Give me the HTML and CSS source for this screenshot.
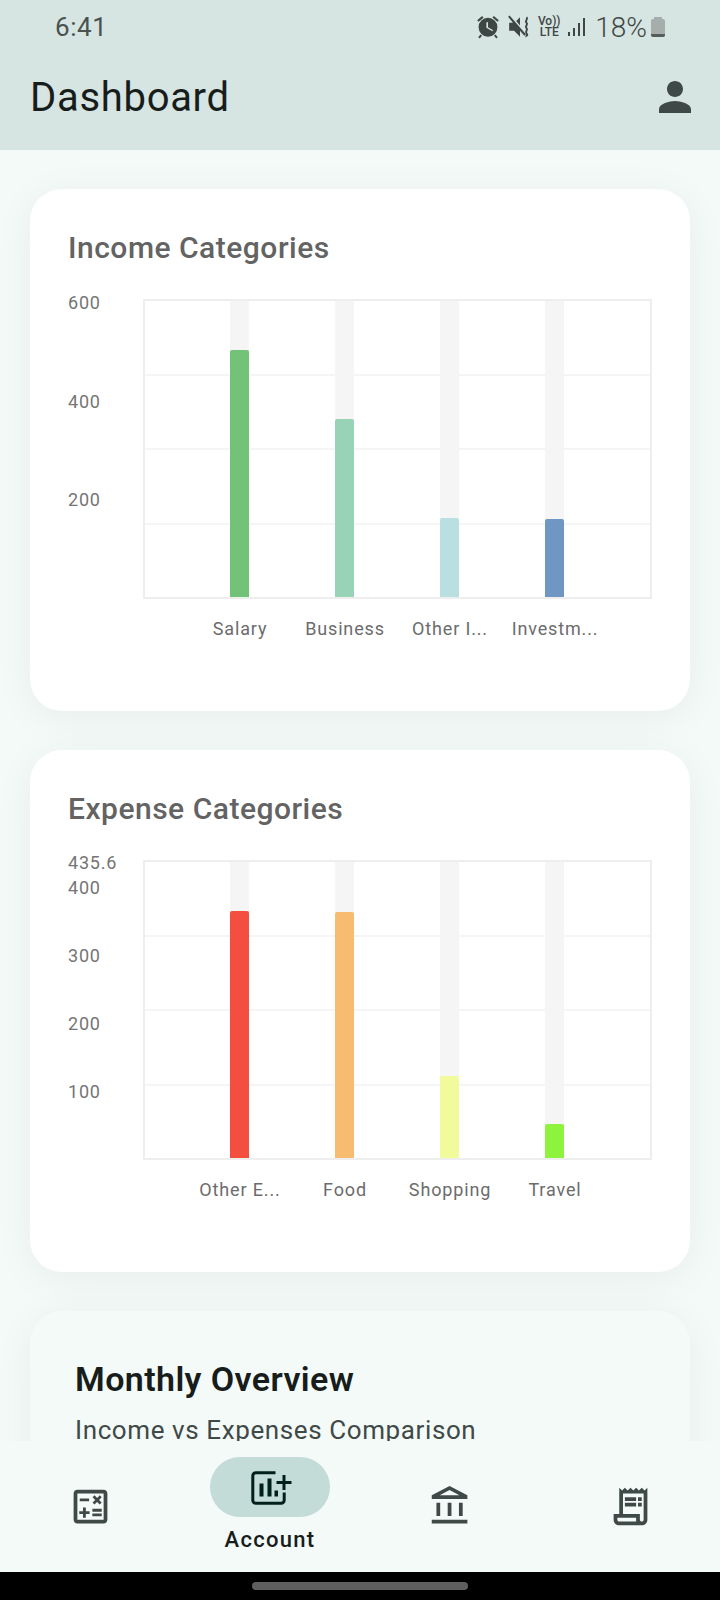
FILE: index.html
```html
<!DOCTYPE html>
<html lang="en">
<head>
  <meta charset="UTF-8" />
  <meta name="viewport" content="width=device-width, initial-scale=1.0"/>
  <title>Dashboard</title>
  <link rel="stylesheet" href="styles.css">
</head>
<body>
  <div class="screen">

    <!-- status bar and app bar -->
    <header class="header">
      <div class="status">
        <span class="time">6:41</span>
        <div class="status-icons">
          <svg class="st-alarm" viewBox="0 0 24 24"><path d="M22 5.7l-4.600-3.900-1.300 1.500 4.600 3.900L22 5.700zM7.900 3.400L6.600 1.900 2 5.700l1.300 1.500 4.600-3.800zM12 3.500a8.700 8.700 0 1 0 0 17.400 8.700 8.700 0 0 0 0-17.400zm4 12.500l-5.500-3.200V7.500H12v4.700l4.800 2.700-.8 1.100z" fill-rule="evenodd"/><path d="M5 19l-2 2.500 1.300 1 2.200-2.500zM19 19l2 2.500-1.300 1-2.200-2.500z"/></svg>
          <svg class="st-mute" viewBox="0 0 24 24"><path d="M1 2.500l1.400-1.200 15 17.500-1.400 1.200-4-4.600V21l-5.500-5.500H2V8h3.500L1 2.500zM12 3v7.500L8.500 6.500 12 3z"/><path d="M18 3c2 2-2 3 0 5s-2 3 0 5-2 3 0 5-1 2 0 3" fill="none" stroke="#3f4745" stroke-width="1.800"/></svg>
          <div class="st-lte"><span>Vo))</span><span>LTE</span></div>
          <div class="st-signal"><i class="s1"></i><i class="s2"></i><i class="s3"></i><i class="s4"></i></div>
          <span class="st-pct">18%</span>
          <div class="st-batt"><b></b><div class="st-cell"><i></i></div></div>
        </div>
      </div>
      <div class="appbar">
        <h1>Dashboard</h1>
        <svg class="icon-person" viewBox="0 0 24 24"><path d="M12 12c2.210 0 4-1.790 4-4s-1.790-4-4-4-4 1.790-4 4 1.790 4 4 4zm0 2c-2.670 0-8 1.340-8 4v2h16v-2c0-2.660-5.330-4-8-4z"/></svg>
      </div>
    </header>

    <main class="content">
      <!-- income chart -->
      <section class="card">
        <h2>Income Categories</h2>
        <div class="chart">
          <div class="y-axis y-income">
            <span>600</span><span>400</span><span>200</span>
          </div>
          <div class="plot">
            <div class="grid"><i></i><i></i><i></i><i></i></div>
            <div class="bars">
              <div class="slot"><div class="track"><div class="bar c-green" style="height:247px"></div></div></div>
              <div class="slot"><div class="track"><div class="bar c-mint" style="height:178px"></div></div></div>
              <div class="slot"><div class="track"><div class="bar c-aqua" style="height:79px"></div></div></div>
              <div class="slot"><div class="track"><div class="bar c-blue" style="height:78px"></div></div></div>
            </div>
          </div>
        </div>
        <div class="x-axis">
          <span>Salary</span><span>Business</span><span>Other I...</span><span>Investm...</span>
        </div>
      </section>

      <!-- expense chart -->
      <section class="card">
        <h2>Expense Categories</h2>
        <div class="chart">
          <div class="y-axis y-expense">
            <span class="y-max">435.6</span><span>400</span><span>300</span><span>200</span><span>100</span>
          </div>
          <div class="plot">
            <div class="grid"><i></i><i></i><i></i><i></i></div>
            <div class="bars">
              <div class="slot"><div class="track"><div class="bar c-red" style="height:247px"></div></div></div>
              <div class="slot"><div class="track"><div class="bar c-orange" style="height:246px"></div></div></div>
              <div class="slot"><div class="track"><div class="bar c-lemon" style="height:82px"></div></div></div>
              <div class="slot"><div class="track"><div class="bar c-lime" style="height:34px"></div></div></div>
            </div>
          </div>
        </div>
        <div class="x-axis">
          <span>Other E...</span><span>Food</span><span>Shopping</span><span>Travel</span>
        </div>
      </section>

      <!-- monthly card, cut off by the nav -->
      <section class="card card-tint">
        <h3>Monthly Overview</h3>
        <p>Income vs Expenses Comparison</p>
      </section>
    </main>

    <!-- bottom navigation -->
    <nav class="nav">
      <div class="nav-item">
        <svg class="nav-icon" viewBox="0 0 24 24"><path d="M19 3H5c-1.100 0-2 .9-2 2v14c0 1.100.9 2 2 2h14c1.100 0 2-.9 2-2V5c0-1.100-.9-2-2-2zm0 16H5V5h14v14z"/><path d="M6.250 7.720h5v1.500h-5zM13 15.750h5v1.500h-5zM13 13.250h5v1.500h-5zM8 18h1.500v-2h2v-1.500h-2v-2H8v2H6V16h2v2zM14.090 10.950l1.410-1.410 1.410 1.410 1.060-1.060-1.410-1.420 1.410-1.410L16.970 6l-1.410 1.410L14.150 6l-1.060 1.060 1.410 1.410-1.410 1.420z"/></svg>
      </div>
      <div class="nav-item active">
        <div class="pill">
          <svg class="nav-icon" viewBox="0 0 45 45"><path class="icon-line" d="M27.500 7.800H7.800a3 3 0 0 0-3 3v24.400a3 3 0 0 0 3 3h25.400a3 3 0 0 0 3-3v-7.700"/><path class="icon-line" d="M28.500 17.500h15M36 10v15"/><path d="M11.500 18.500h4v13h-4zM19.500 13.500h4v18h-4zM26.500 25.500H30v6h-3.500z"/></svg>
        </div>
        <span class="nav-label">Account</span>
      </div>
      <div class="nav-item">
        <svg class="nav-icon" viewBox="0 0 24 24"><path d="M6.500 10h-2v7h2v-7zm6 0h-2v7h2v-7zm8.500 9H2v2h19v-2zm-2.500-9h-2v7h2v-7zm-7-6.740L16.710 6H6.290l5.210-2.740m0-2.260L2 6v2h19V6l-9.500-5z"/></svg>
      </div>
      <div class="nav-item">
        <svg class="nav-icon" viewBox="0 0 24 24"><path fill-rule="evenodd" d="M19.500 3.500L18 2l-1.500 1.500L15 2l-1.500 1.500L12 2l-1.500 1.500L9 2 7.500 3.500 6 2v14H3v3c0 1.660 1.340 3 3 3h12c1.660 0 3-1.340 3-3V2l-1.500 1.500zM15 20H6c-.55 0-1-.45-1-1v-1h10v2zm4-1c0 .55-.45 1-1 1s-1-.45-1-1v-3H8V5h11v14z"/><path d="M9 7h6v2H9zm7 0h2v2h-2zm-7 3h6v2H9zm7 0h2v2h-2z"/></svg>
      </div>
    </nav>

    <div class="home-bar"><i></i></div>
  </div>
</body>
</html>
```

FILE: styles.css
```css
* {
  box-sizing: border-box;
}

body {
  margin: 0;
  font-family: Roboto, "Noto Sans", sans-serif;
}

.screen {
  width: 720px;
  height: 1600px;
  display: flex;
  flex-direction: column;
  background: #f4faf8;
  overflow: hidden;
}

/* header */
.header {
  height: 150px;
  flex-shrink: 0;
  background: #d6e5e2;
}

.status {
  height: 54px;
  padding: 0 55px 0 55px;
  display: flex;
  align-items: center;
  justify-content: space-between;
  color: #3f4745;
}

.time {
  font-size: 26px;
  letter-spacing: 0.6px;
  color: #4a5250;
}

.status-icons {
  display: flex;
  align-items: center;
}

.status-icons svg {
  fill: #3f4745;
}

.st-alarm {
  width: 26px;
  height: 26px;
}

.st-mute {
  width: 26px;
  height: 26px;
  margin-left: 6px;
}

.st-lte {
  width: 22px;
  margin-left: 5px;
  display: flex;
  flex-direction: column;
  align-items: center;
  font-size: 12px;
  line-height: 11px;
  font-weight: 500;
}

.st-signal {
  height: 18px;
  margin-left: 8px;
  display: flex;
  align-items: flex-end;
  gap: 3px;
}

.st-signal i {
  width: 2px;
  background: #3f4745;
}

.s1 { height: 4px; }
.s2 { height: 8px; }
.s3 { height: 13px; }
.s4 { height: 18px; }

.st-pct {
  margin-left: 10px;
  font-size: 28px;
  font-weight: 300;
}

.st-batt {
  width: 14px;
  margin-left: 4px;
  display: flex;
  flex-direction: column;
  align-items: center;
}

.st-batt b {
  width: 8px;
  height: 2px;
  background: #a6aeab;
}

.st-cell {
  width: 14px;
  height: 18px;
  border-radius: 2px;
  background: #a6aeab;
  display: flex;
  align-items: flex-end;
}

.st-cell i {
  width: 100%;
  height: 3px;
  background: #555c5a;
  border-radius: 0 0 2px 2px;
}

.appbar {
  padding: 0 21px 0 30px;
  height: 86px;
  display: flex;
  align-items: center;
  justify-content: space-between;
}

.appbar h1 {
  margin: 0;
  font-size: 40px;
  font-weight: 400;
  letter-spacing: 0.7px;
  color: #171d1b;
}

.icon-person {
  width: 48px;
  height: 48px;
  fill: #3f4947;
}

/* cards */
.content {
  flex: 1;
  min-height: 0;
  padding: 39px 30px 0;
  display: flex;
  flex-direction: column;
  gap: 39px;
  overflow: hidden;
}

.card {
  flex-shrink: 0;
  height: 522px;
  padding: 38px 38px 0;
  background: #fff;
  border-radius: 32px;
  box-shadow: 0 6px 40px rgba(0, 0, 0, 0.055);
}

.card h2 {
  margin: 2px 0 0;
  height: 38px;
  line-height: 38px;
  font-size: 30px;
  font-weight: 500;
  letter-spacing: 0.5px;
  color: #636363;
}

.chart {
  margin-top: 32px;
  display: flex;
}

.y-axis {
  width: 75px;
  display: flex;
  flex-direction: column;
  font-size: 18px;
  line-height: 18px;
  letter-spacing: 0.8px;
  color: #757575;
}

.y-income {
  gap: 80.600px;
  margin-top: -5px;
}

.y-expense {
  gap: 50px;
  margin-top: -6px;
}

.y-max {
  margin-bottom: -43px;
}

.plot {
  position: relative;
  width: 509px;
  height: 300px;
  border: 2px solid #eeeeee;
}

.grid {
  position: absolute;
  inset: 0;
  display: flex;
  flex-direction: column;
}

.grid i {
  flex: 1;
  border-bottom: 2px solid #f5f5f5;
}

.grid i:last-child {
  border-bottom: none;
}

.bars {
  position: relative;
  height: 100%;
  display: flex;
  justify-content: center;
  padding-right: 1px;
}

.slot {
  width: 105px;
  display: flex;
  justify-content: center;
}

.track {
  width: 18.600px;
  height: 100%;
  background: #f5f5f5;
  display: flex;
  align-items: flex-end;
}

.bar {
  width: 100%;
  border-radius: 2px 2px 0 0;
}

.c-green { background: #72c377; }
.c-mint { background: #98d3b8; }
.c-aqua { background: #b9dfe0; }
.c-blue { background: #7096c3; }
.c-red { background: #f44e40; }
.c-orange { background: #f8bc70; }
.c-lemon { background: #f2fb9c; }
.c-lime { background: #8df33c; }

.x-axis {
  margin: 18px 0 0 119.500px;
  display: flex;
}

.x-axis span {
  width: 105px;
  text-align: center;
  font-size: 18px;
  line-height: 24px;
  letter-spacing: 0.85px;
  color: #6c6c6c;
  white-space: nowrap;
}

.card-tint {
  background: #f4faf8;
  padding: 48px 45px 0;
}

.card-tint h3 {
  margin: 0;
  font-size: 34px;
  line-height: 40px;
  font-weight: 600;
  letter-spacing: 0.4px;
  color: #171d1b;
}

.card-tint p {
  margin: 14px 0 0;
  font-size: 26px;
  line-height: 34px;
  letter-spacing: 0.6px;
  color: #3f4947;
}

/* bottom nav */
.nav {
  position: relative;
  height: 131px;
  flex-shrink: 0;
  display: grid;
  grid-template-columns: repeat(4, 1fr);
  background: #f4faf8;
}

.nav-item {
  display: flex;
  flex-direction: column;
  align-items: center;
  justify-content: center;
}

.nav-item.active {
  justify-content: flex-start;
  padding-top: 16px;
}

.nav-icon {
  width: 45px;
  height: 45px;
  fill: #3f4947;
}

.pill {
  width: 120px;
  height: 60px;
  border-radius: 30px;
  background: #c3dcd8;
  display: flex;
  align-items: center;
  justify-content: center;
}

.pill .nav-icon {
  fill: #00201c;
}

.icon-line {
  fill: none;
  stroke: #00201c;
  stroke-width: 3px;
}

.nav-label {
  margin-top: 8px;
  font-size: 22px;
  line-height: 30px;
  font-weight: 500;
  letter-spacing: 1.300px;
  color: #171d1b;
}

.home-bar {
  height: 28px;
  flex-shrink: 0;
  background: #000;
  display: flex;
  justify-content: center;
  padding-top: 10px;
}

.home-bar i {
  width: 216px;
  height: 8px;
  border-radius: 4px;
  background: #5f5f5f;
}
```
